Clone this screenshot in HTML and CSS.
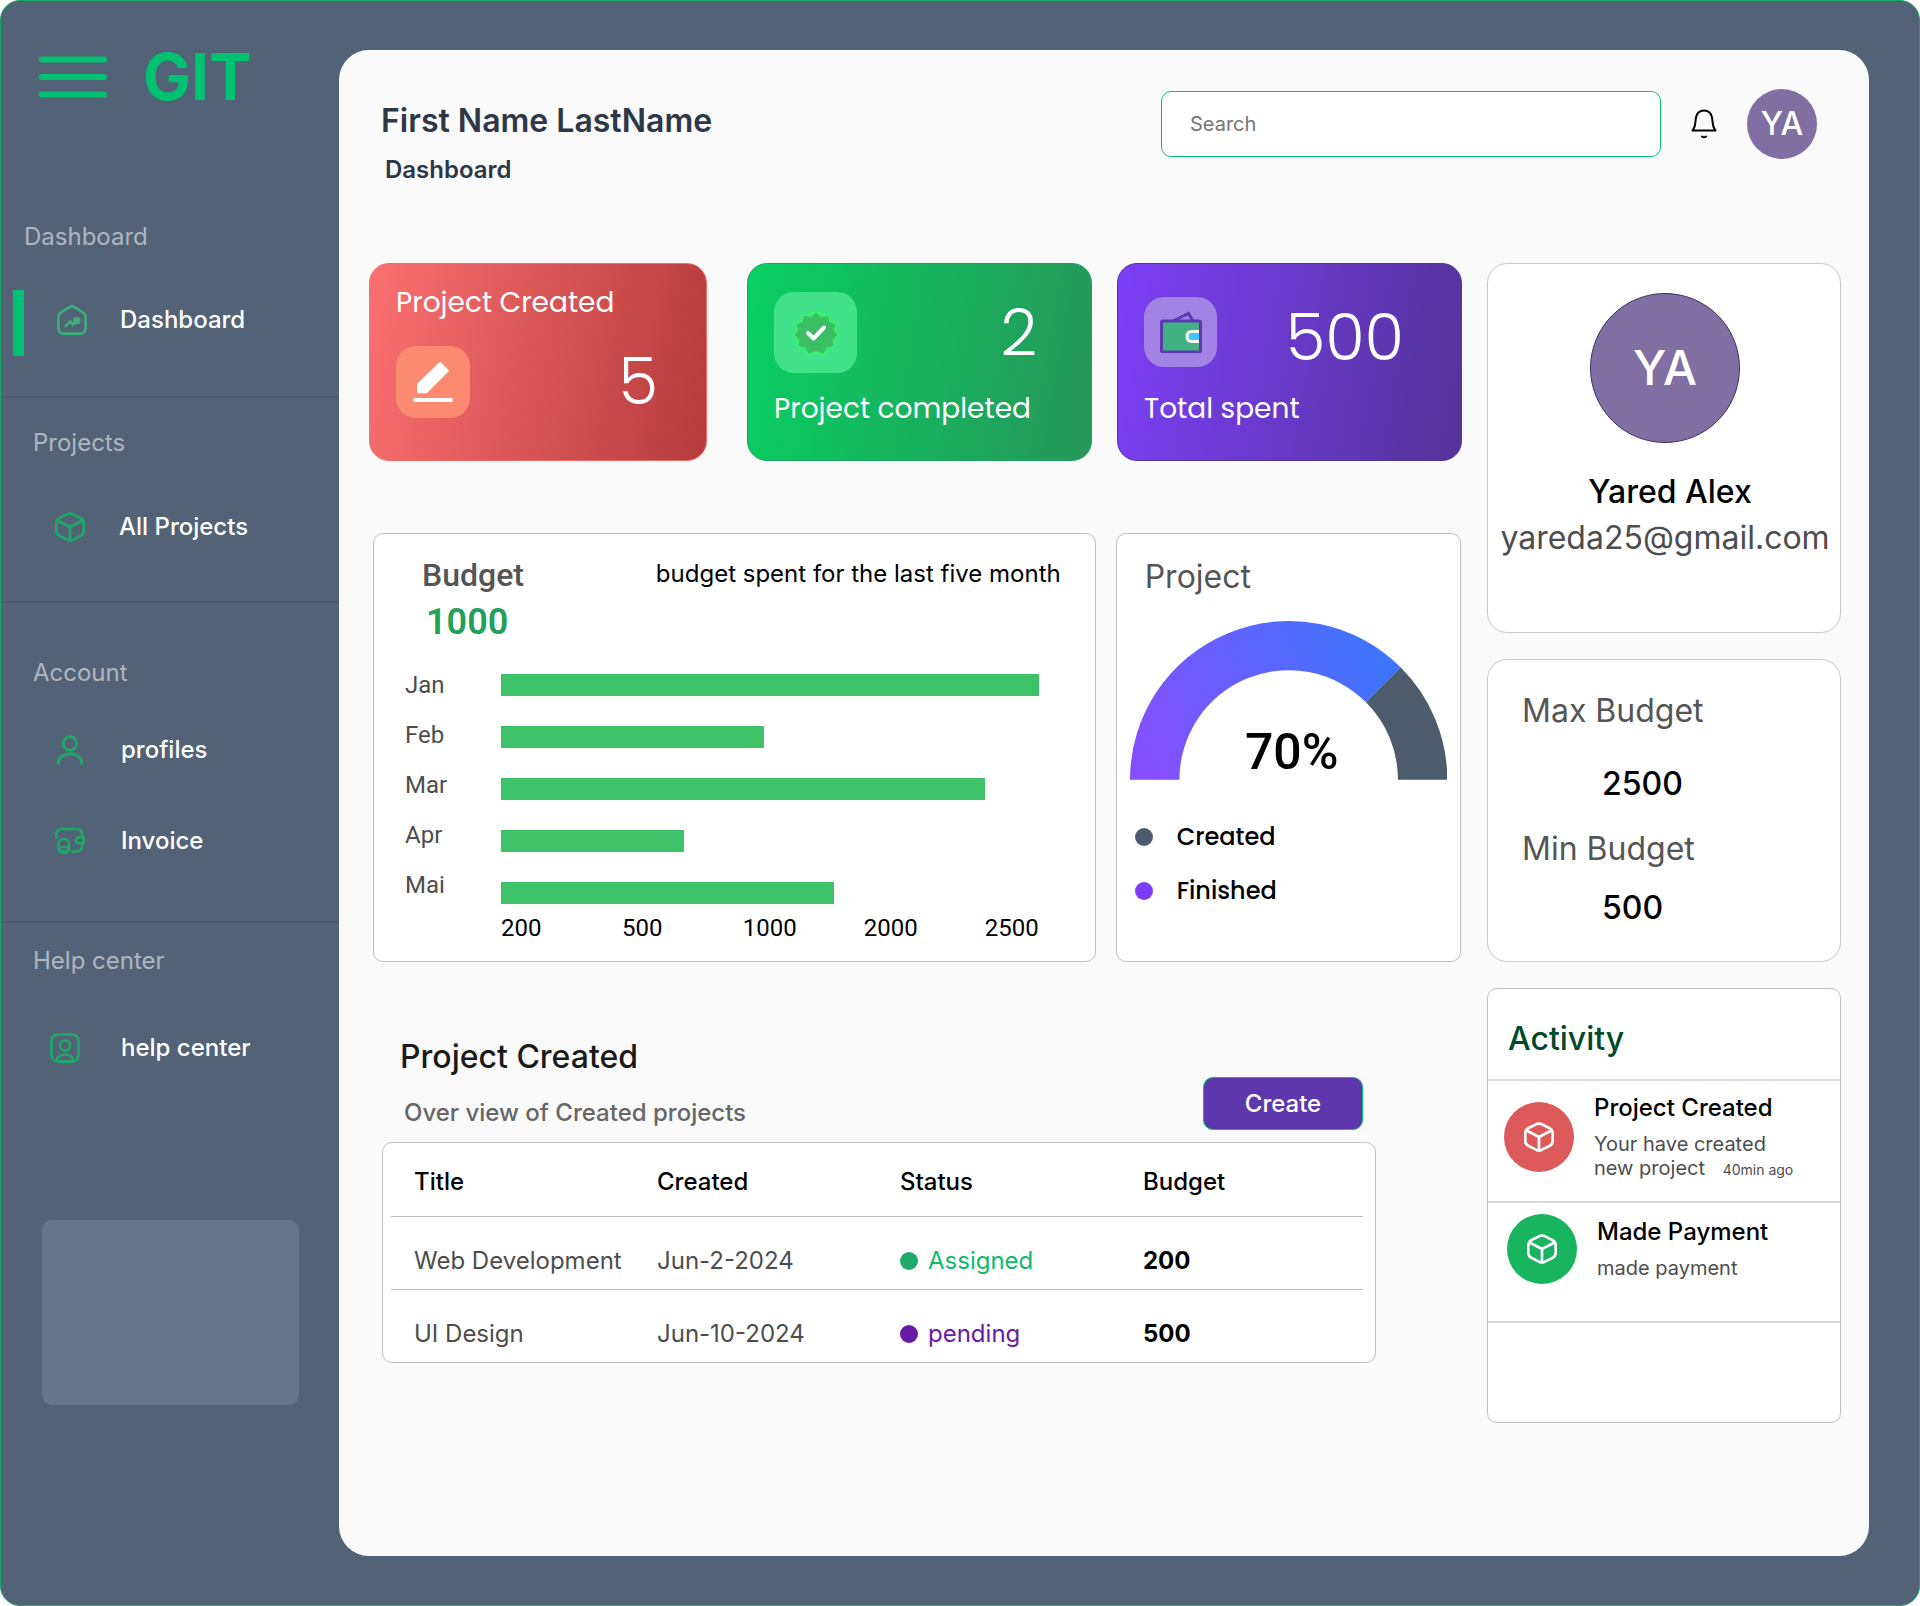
FILE: index.html
```html
<!DOCTYPE html>
<html lang="en">
<head>
<meta charset="utf-8">
<meta name="viewport" content="width=device-width, initial-scale=1">
<title>GIT Dashboard</title>
<link rel="stylesheet" href="styles.css">
</head>
<body>
<svg class="sprite" aria-hidden="true">
  <symbol id="cube" viewBox="0 0 30 30">
    <path d="M12.5 2.1 4.2 6.2Q1.3 7.8 1.3 11V19Q1.3 22.2 4.2 23.800L12.500 27.900Q15 29 17.500 27.900L25.800 23.800Q28.700 22.200 28.700 19V11Q28.700 7.800 25.800 6.200L17.500 2.100Q15 1 12.500 2.100ZM2.500 8.500 15 15 27.500 8.500M15 15V28.500" fill="none" stroke="currentColor" stroke-width="2.700" stroke-linejoin="round"/>
  </symbol>
</svg>
<div class="app">
  <aside class="sidebar">
    <div class="brand">
      <button class="menu" type="button" aria-label="Toggle menu">
        <svg width="68" height="42" viewBox="0 0 68 42"><path d="M3 3.500H65M3 21H65M3 38.500H65" stroke="#00c271" stroke-width="6" stroke-linecap="round"/></svg>
      </button>
      <span class="logo">GIT</span>
    </div>
    <nav>
      <section class="group group-home">
        <h2 class="group-label">Dashboard</h2>
        <a class="link active" href="#">
          <svg class="icon soft" viewBox="0 0 30 30" fill="none" stroke="currentColor" stroke-width="2.600" stroke-linecap="round" stroke-linejoin="round"><path d="M12.400 2.100 3.500 7.700Q1.400 9.200 1.400 12V23.500Q1.400 28.600 6.500 28.600H23.500Q28.600 28.600 28.600 23.500V12Q28.600 9.200 26.500 7.700L17.600 2.100Q15 .6 12.400 2.100Z"/><path d="M8.700 21 13.500 16.200 15.700 20 20.500 15"/><rect x="17.500" y="13.500" width="4.500" height="4.500" rx="1" fill="currentColor"/></svg>
          Dashboard
        </a>
      </section>
      <section class="group group-projects">
        <h2 class="group-label">Projects</h2>
        <a class="link" href="#"><svg class="icon"><use href="#cube"/></svg>All Projects</a>
      </section>
      <section class="group group-account">
        <h2 class="group-label">Account</h2>
        <a class="link" href="#">
          <svg class="icon" viewBox="0 0 30 30" fill="none" stroke="currentColor" stroke-width="2.800" stroke-linecap="round"><circle cx="15" cy="8.500" r="6.800"/><path d="M3.400 28.500C3.400 15.500 26.600 15.500 26.600 28.500"/></svg>
          profiles
        </a>
        <a class="link" href="#">
          <svg class="icon" viewBox="0 0 30 30" fill="none" stroke="currentColor" stroke-width="2.500" stroke-linecap="round" stroke-linejoin="round"><path d="M1.300 11.500V9Q1.300 3 7.500 3H21Q27.200 3 27.200 9V11M27.200 17.500V19Q27.200 25.500 21 25.500H17M28.500 11.200H24.500Q21 11.500 21 14.200 21 17 24.500 17.200H28.500Z"/><rect x="3.500" y="13" width="10.500" height="14" rx="5"/><path d="M4.500 20.500Q8.700 22.500 13 20.500M5 24Q8.700 25.500 12.500 24" stroke-width="1.600"/></svg>
          Invoice
        </a>
      </section>
      <section class="group group-help">
        <h2 class="group-label">Help center</h2>
        <a class="link link-help" href="#">
          <svg class="icon" viewBox="0 0 30 30" fill="none" stroke="currentColor" stroke-width="2.600" stroke-linecap="round"><rect x="1.400" y="1.400" width="27.200" height="27.200" rx="7"/><circle cx="15" cy="12.500" r="5"/><path d="M6.500 27.500C9 19.500 21 19.500 23.500 27.500"/></svg>
          help center
        </a>
      </section>
    </nav>
    <div class="promo"></div>
  </aside>

  <main class="panel">
    <header class="topbar">
      <div class="who">
        <h1>First Name LastName</h1>
        <p class="crumb">Dashboard</p>
      </div>
      <div class="tools">
        <input class="search" type="search" placeholder="Search" aria-label="Search">
        <button class="bell" type="button" aria-label="Notifications">
          <svg width="26" height="30" viewBox="0 0 26 30" fill="none" stroke="#000" stroke-width="2" stroke-linecap="round" stroke-linejoin="round"><path d="M1.500 21.500C5 17.500 4 13 5 8.500 6 3.500 9 1.500 13 1.500S20 3.500 21 8.500C22 13 21 17.500 24.500 21.500Z"/><path d="M11 27.500Q13 29 15 27.500"/></svg>
        </button>
        <span class="avatar">YA</span>
      </div>
    </header>

    <div class="layout">
      <div class="primary">
        <section class="stats">
          <article class="stat stat-created">
            <h2 class="stat-label">Project Created</h2>
            <div class="stat-row">
              <span class="tile"><svg width="40" height="40" viewBox="0 0 40 40" fill="#fff"><path d="M26 .5Q27 -.5 28 .5L35.200 7.700Q36.200 8.700 35.200 9.700L15 30Q13.800 31.200 12 31.200H5Q4 31.200 4 30.200V23.500Q4 22 5.200 20.800Z"/><rect x="0" y="36" width="40" height="4" rx="2"/></svg></span>
              <span class="stat-value">5</span>
            </div>
          </article>
          <article class="stat stat-done">
            <div class="stat-row">
              <span class="tile"><svg width="50" height="50" viewBox="0 0 50 50"><path d="M25 3 30.500 8 37.500 6 39.500 13 46 15.500 44 22 48 27 43 32 43.500 39 36.500 40.500 33 47 25 44.500 17 47 13.500 40.500 6.500 39 7 32 2 27 6 22 4 15.500 10.500 13 12.500 6 19.500 8Z" fill="#3cbf63" stroke="#36f071" stroke-width="2.500"/><path d="M17 25 22.500 30.500 33 19.500" fill="none" stroke="#fff" stroke-width="4" stroke-linecap="round" stroke-linejoin="round"/></svg></span>
              <span class="stat-value">2</span>
            </div>
            <h2 class="stat-label">Project completed</h2>
          </article>
          <article class="stat stat-spent">
            <div class="stat-row">
              <span class="tile"><svg width="42" height="42" viewBox="0 0 42 42"><path d="M13 10 28.500 2.500 33 10" fill="none" stroke="#5f37b3" stroke-width="3"/><rect x="1.500" y="10" width="39" height="31" rx="1.500" fill="#41b184" stroke="#5f37b3" stroke-width="3"/><path d="M39 20.500H31.500Q27 20.500 27 25.500T31.500 30.500H39" fill="#40c4ff" stroke="#f4f9e6" stroke-width="3"/></svg></span>
              <span class="stat-value">500</span>
            </div>
            <h2 class="stat-label">Total spent</h2>
          </article>
        </section>

        <section class="charts">
          <article class="card budget-chart">
            <div class="chart-head">
              <div>
                <h2>Budget</h2>
                <p class="total">1000</p>
              </div>
              <p class="note">budget spent for the last five month</p>
            </div>
            <div class="chart-body">
              <ul class="months"><li>Jan</li><li>Feb</li><li>Mar</li><li>Apr</li><li>Mai</li></ul>
              <div class="plot">
                <div class="bars">
                  <div class="bar" style="width:100%"></div>
                  <div class="bar" style="width:49%"></div>
                  <div class="bar" style="width:90%"></div>
                  <div class="bar" style="width:34%"></div>
                  <div class="bar" style="width:62%"></div>
                </div>
                <ul class="axis"><li>200</li><li>500</li><li>1000</li><li>2000</li><li>2500</li></ul>
              </div>
            </div>
          </article>
          <article class="card gauge-card">
            <h2>Project</h2>
            <svg class="gauge" viewBox="0 0 318 159" role="img" aria-label="70% finished">
              <defs><linearGradient id="arc" x1="0" y1=".6" x2="1" y2=".3"><stop offset="0" stop-color="#8450ff"/><stop offset="1" stop-color="#3a76fb"/></linearGradient></defs>
              <path d="M0 159A159 159 0 0 1 271.400 46.600L236.500 81.500A109.500 109.500 0 0 0 49.500 159Z" fill="url(#arc)"/>
              <path d="M271.400 46.600A159 159 0 0 1 318 159H268.500A109.500 109.500 0 0 0 236.500 81.500Z" fill="#4d5c6c"/>
              <text x="162" y="148" text-anchor="middle" class="gauge-text">70%</text>
            </svg>
            <ul class="legend">
              <li><i class="dot dot-slate"></i>Created</li>
              <li><i class="dot dot-violet"></i>Finished</li>
            </ul>
          </article>
        </section>

        <section class="projects">
          <div class="projects-head">
            <div>
              <h2>Project Created</h2>
              <p>Over view of Created projects</p>
            </div>
            <button class="create" type="button">Create</button>
          </div>
          <div class="card table-card">
            <table>
              <thead><tr><th>Title</th><th>Created</th><th>Status</th><th>Budget</th></tr></thead>
              <tbody>
                <tr><td>Web Development</td><td>Jun-2-2024</td><td><span class="status assigned"><i class="dot dot-green"></i>Assigned</span></td><td class="amount">200</td></tr>
                <tr><td>UI Design</td><td>Jun-10-2024</td><td><span class="status pending"><i class="dot dot-purple"></i>pending</span></td><td class="amount">500</td></tr>
              </tbody>
            </table>
          </div>
        </section>
      </div>

      <div class="secondary">
        <section class="card round profile">
          <span class="avatar avatar-large">YA</span>
          <h2>Yared Alex</h2>
          <p>yareda25@gmail.com</p>
        </section>
        <dl class="card round limits">
          <dt>Max Budget</dt><dd>2500</dd>
          <dt>Min Budget</dt><dd>500</dd>
        </dl>
        <section class="card activity">
          <h2>Activity</h2>
          <ul>
            <li class="event event-created">
              <span class="badge"><svg class="icon"><use href="#cube"/></svg></span>
              <div>
                <h3>Project Created</h3>
                <p>Your have created<br>new project <time>40min ago</time></p>
              </div>
            </li>
            <li class="event event-paid">
              <span class="badge"><svg class="icon"><use href="#cube"/></svg></span>
              <div>
                <h3>Made Payment</h3>
                <p>made payment</p>
              </div>
            </li>
          </ul>
        </section>
      </div>
    </div>
  </main>
</div>
</body>
</html>
```
FILE: styles.css
```css
* { box-sizing: border-box; margin: 0; padding: 0; }
ul { list-style: none; }
button { border: 0; background: none; font: inherit; cursor: pointer; }
svg { display: block; }

body {
  background: #fff;
  color: #000;
  font: 400 24px/32px Inter, "Liberation Sans", sans-serif;
}
h1, h2 { font-size: 32px; line-height: 40px; font-weight: 500; }

.sprite { position: absolute; width: 0; height: 0; }
.app {
  display: grid;
  grid-template-columns: 338px minmax(0, 1fr);
  min-height: 100vh;
  border: 1px solid #18a867;
  border-radius: 20px;
  background: #526377;
}

/* Sidebar */
.sidebar { padding-top: 44px; }
.brand { display: flex; align-items: center; gap: 36px; padding-left: 38px; margin-bottom: 112px; }
.logo { color: #00c271; font-size: 64px; line-height: 64px; font-weight: 700; }
.group { border-bottom: 2px solid #4b5b6c; }
.group-label { padding-left: 32px; font-size: 24px; line-height: 32px; font-weight: 400; color: #aeb6bf; }
.link { display: flex; align-items: center; gap: 36px; padding-left: 54px; color: #fff; font-weight: 500; text-decoration: none; }
.icon { flex: none; width: 30px; height: 30px; color: #1fa968; }
.soft { color: #3dae7a; }
.group-home { padding-bottom: 40px; }
.group-home .group-label { padding-left: 23px; margin-bottom: 37px; }
.active { margin-left: 12px; padding: 14px 0 20px 33px; gap: 33px; border-left: 11px solid #00c271; }
.group-projects { padding: 29px 0 58px; }
.group-projects .group-label { margin-bottom: 52px; }
.group-projects .link { gap: 34px; }
.group-account { padding: 54px 0 64px; }
.group-account .group-label { margin-bottom: 45px; }
.group-account .link + .link { margin-top: 59px; }
.group-help { padding-top: 22px; border: 0; }
.group-help .group-label { margin-bottom: 55px; }
.link-help { padding-left: 49px; gap: 41px; }
.promo { height: 185px; margin: 156px 40px 0 41px; border-radius: 10px; background: #65758b; }

/* Panel */
.panel { margin: 49px 50px 49px 0; padding: 0 28px 40px 30px; border-radius: 30px; background: #fafafa; }
.topbar { display: flex; justify-content: space-between; align-items: flex-start; margin-bottom: 77px; }
.who { padding: 51px 0 0 12px; color: #2d3748; }
.who h1 { font-weight: 600; }
.crumb { margin: 13px 0 0 4px; font-weight: 600; }
.tools { display: flex; align-items: center; gap: 30px; padding: 39px 24px 0 0; }
.search {
  width: 500px;
  height: 66px;
  padding: 0 28px;
  border: 1px solid #00c271;
  border-radius: 10px;
  background: #fff;
  font: 400 20px/24px Inter, sans-serif;
}
.search::placeholder { color: #757575; }
.avatar {
  display: grid;
  place-items: center;
  width: 70px;
  height: 70px;
  border-radius: 50%;
  background: #806fa3;
  color: #fff;
  font-size: 32px;
  font-weight: 500;
}

.layout { display: grid; grid-template-columns: minmax(0, 1fr) 354px; gap: 25px; }
.card { border: 1px solid #bfbfbf; border-radius: 10px; background: #fff; }
.round { border-radius: 20px; border-color: #c9c9c9; }

/* Stat cards */
.stats { display: grid; grid-template-columns: 353fr 345fr 345fr; gap: 25px; margin-bottom: 72px; }
.stat { height: 198px; border: 1px solid; border-radius: 20px; padding-left: 26px; color: #fff; font-family: Poppins, Inter, sans-serif; }
.stat-label { font-size: 28px; font-weight: 400; }
.stat-row { display: flex; align-items: center; justify-content: space-between; }
.stat-value { font-size: 64px; line-height: 64px; font-weight: 300; }
.tile { display: grid; place-items: center; border-radius: 20px; }
.stat-created { margin-right: 15px; padding-top: 19px; padding-right: 48px; border-color: #f66c6c; background: linear-gradient(100deg, #fa7070, #b63b3b); }
.stat-created .stat-row { margin-top: 23px; }
.stat-created .tile { width: 74px; height: 72px; background: #fb8a70; }
.stat-done { padding-top: 28px; padding-right: 54px; border-color: #18a35c; background: linear-gradient(100deg, #08d062, #27955a); }
.stat-done .tile { width: 83px; height: 81px; background: #41e08a; }
.stat-done .stat-label { margin-top: 16px; }
.stat-spent { padding-top: 33px; padding-right: 57px; border-color: #57349f; background: linear-gradient(100deg, #7c3ff7, #543398); }
.stat-spent .tile { align-self: flex-start; width: 73px; height: 70px; background: #a282e2; }
.stat-spent .stat-value { line-height: 82px; }
.stat-spent .stat-label { margin-top: 10px; }

/* Charts */
.charts { display: grid; grid-template-columns: 722fr 345fr; gap: 20px; padding: 0 1px 0 4px; margin-bottom: 75px; }
.budget-chart { padding: 21px 0 17px; font-family: Roboto, sans-serif; }
.chart-head { display: flex; justify-content: space-between; padding: 0 34px 0 48px; color: #555; }
.chart-head h2 { margin-bottom: 7px; }
.total { padding-left: 4px; font-size: 36px; line-height: 40px; font-weight: 600; color: #22a05c; }
.note { padding-top: 3px; color: #000; font-family: Inter, sans-serif; }
.chart-body { display: flex; gap: 48px; padding: 27px 56px 0 31px; }
.months { display: grid; gap: 18px; align-content: start; width: 48px; color: #4d4d4d; }
.plot { flex: 1; padding-top: 5px; }
.bars { display: grid; gap: 30px; }
.bar { height: 22px; background: #3dc267; }
.axis { display: grid; grid-template-columns: repeat(4, 1fr) 54px; margin-top: 8px; }
.gauge-card { padding: 23px 13px 0; }
.gauge-card h2 { padding-left: 15px; font-weight: 400; color: #555; }
.gauge { width: 100%; margin-top: 24px; }
.gauge-text { font-family: Roboto, sans-serif; font-size: 50px; font-weight: 500; }
.legend { display: grid; gap: 22px; padding: 41px 5px 0; font-family: Poppins, Inter, sans-serif; font-weight: 500; }
.legend li { display: flex; align-items: center; gap: 24px; }
.dot { flex: none; width: 18px; height: 18px; border-radius: 50%; }
.dot-slate { background: #4d5c6c; }
.dot-violet { background: #7a3ff5; }
.dot-green { background: #1fa968; }
.dot-purple { background: #671ba8; }

/* Projects table */
.projects { padding: 0 86px 0 13px; }
.projects-head { display: flex; justify-content: space-between; align-items: flex-end; padding: 0 13px 0 18px; margin-bottom: 12px; }
.projects-head h2 { color: #1a1a1a; }
.projects-head p { margin: 20px 0 1px 4px; color: #666; font-weight: 500; }
.create { width: 160px; height: 53px; border: 1px solid #00c271; border-radius: 10px; background: #5f37ad; color: #fff; font-weight: 500; }
.table-card { padding: 0 12px 0 8px; }
table { width: 100%; table-layout: fixed; border-collapse: collapse; }
th { padding: 23px 0 18px 23px; text-align: left; font-weight: 500; }
td { padding: 28px 0 12px 23px; color: #4d4d4d; white-space: nowrap; }
tr { border-bottom: 1px solid #bfbfbf; }
tbody tr:last-child { border: 0; }
.status { display: flex; align-items: center; gap: 10px; }
.assigned { color: #10b96c; }
.pending { color: #671ba8; }
.amount { font-weight: 700; color: #000; }

/* Right column */
.secondary { display: grid; gap: 26px; align-content: start; }
.profile { display: flex; flex-direction: column; align-items: center; min-height: 370px; padding: 29px 0 0 2px; }
.avatar-large { width: 150px; height: 150px; border: 1px solid #3f3163; font-size: 48px; }
.profile h2 { margin: 29px 0 6px; padding-left: 10px; }
.profile p { font-size: 32px; line-height: 40px; color: #4d4d4d; }
.limits { padding: 31px 33px 33px 34px; font-size: 32px; line-height: 40px; }
.limits dt { color: #555; }
.limits dd { margin: 33px 0 25px 80px; font-weight: 500; }
.limits dd:last-child { margin: 19px 0 0 80px; }
.activity { padding-bottom: 99px; }
.activity h2 { padding: 30px 20px 20px; color: #00492b; }
.event { display: flex; gap: 20px; padding-left: 16px; border-top: 2px solid #d9d9d9; }
.event h3 { font-size: 24px; line-height: 32px; font-weight: 500; margin-bottom: 8px; }
.event p { font-size: 20px; line-height: 24px; color: #4d4d4d; }
.event time { margin-left: 12px; font-size: 14px; }
.badge { display: grid; place-items: center; width: 70px; height: 70px; border-radius: 50%; }
.badge .icon { color: #fff; }
.event-created { height: 122px; padding-top: 11px; }
.event-created .badge { margin-top: 10px; background: #dc5a5a; }
.event-paid { height: 122px; padding-top: 11px; padding-left: 19px; border-bottom: 2px solid #d9d9d9; }
.event-paid .badge { background: #18b45f; }
.event-paid div { padding-top: 2px; }
```
